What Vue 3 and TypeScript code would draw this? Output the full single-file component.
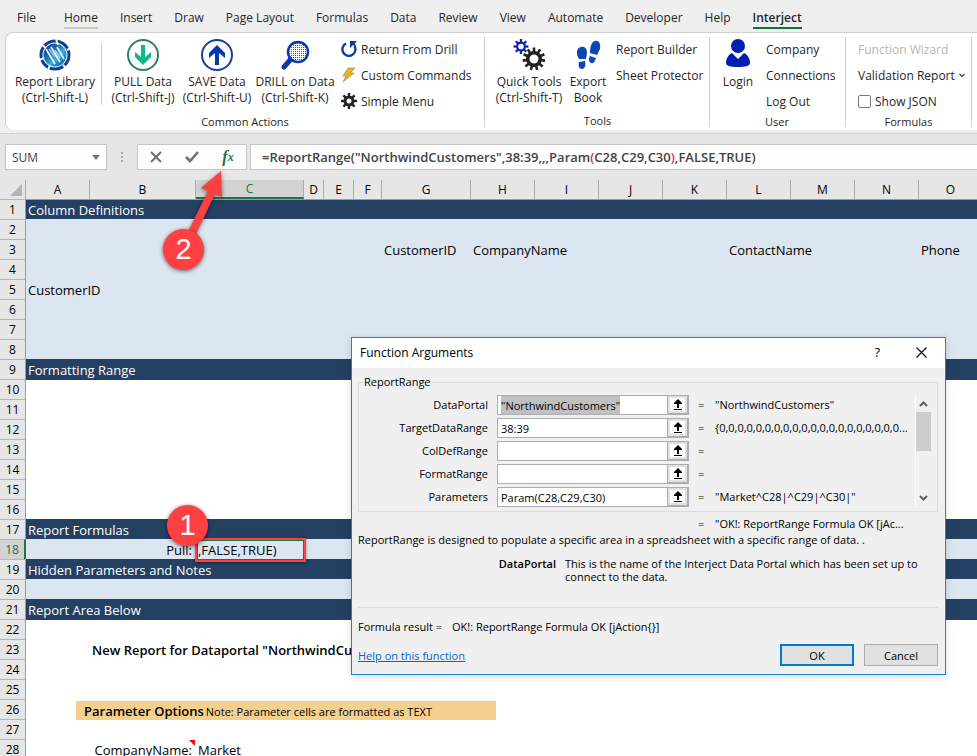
<script setup lang="ts">
import { onMounted, ref } from 'vue'

interface Row {
  n: number
  kind: 'navy' | 'blue' | 'plain'
  cells: Record<string, string>
}

interface Argument {
  name: string
  value: string
  result: string
}

const tabs = [
  'File', 'Home', 'Insert', 'Draw', 'Page Layout', 'Formulas', 'Data',
  'Review', 'View', 'Automate', 'Developer', 'Help', 'Interject',
]

const columns = ['A', 'B', 'C', 'D', 'E', 'F', 'G', 'H', 'I', 'J', 'K', 'L', 'M', 'N', 'O']

const cellText: Record<number, Record<string, string>> = {
  1: { A: 'Column Definitions' },
  3: { G: 'CustomerID', H: 'CompanyName', L: 'ContactName', O: 'Phone' },
  5: { A: 'CustomerID' },
  9: { A: 'Formatting Range' },
  17: { A: 'Report Formulas' },
  18: { B: 'Pull:', C: ',FALSE,TRUE)' },
  19: { A: 'Hidden Parameters and Notes' },
  21: { A: 'Report Area Below' },
  23: { B: 'New Report for Dataportal "NorthwindCustomers"' },
  28: { B: 'CompanyName:', C: 'Market' },
}

const navyRows = [1, 9, 17, 19, 21]
const blueRows = [2, 3, 4, 5, 6, 7, 8, 18, 20]

const rows: Row[] = Array.from({ length: 28 }, (_, i) => {
  const n = i + 1
  const kind = navyRows.includes(n) ? 'navy' : blueRows.includes(n) ? 'blue' : 'plain'
  return { n, kind, cells: cellText[n] ?? {} }
})

const args = ref<Argument[]>([
  { name: 'DataPortal', value: '"NorthwindCustomers"', result: '"NorthwindCustomers"' },
  { name: 'TargetDataRange', value: '38:39', result: '{0,0,0,0,0,0,0,0,0,0,0,0,0,0,0,0,0,0,0,0...' },
  { name: 'ColDefRange', value: '', result: '' },
  { name: 'FormatRange', value: '', result: '' },
  { name: 'Parameters', value: 'Param(C28,C29,C30)', result: '"Market^C28|^C29|^C30|"' },
])

const nameBox = ref('SUM')
const showJson = ref(false)

// Outline of a cog wheel with a round hole, for fill-rule evenodd.
function gear(cx: number, cy: number, teeth: number, outer: number, inner: number, hole: number): string {
  const pts: string[] = []
  const step = (Math.PI * 2) / teeth
  for (let i = 0; i < teeth; i++) {
    const a = i * step - Math.PI / 2
    const corners: [number, number][] = [
      [-0.28, inner], [-0.2, outer], [0.2, outer], [0.28, inner],
    ]
    for (const [t, r] of corners) {
      pts.push(`${(cx + Math.cos(a + t * step) * r).toFixed(2)} ${(cy + Math.sin(a + t * step) * r).toFixed(2)}`)
    }
  }
  return `M${pts.join('L')}ZM${cx - hole} ${cy}a${hole} ${hole} 0 1 0 ${hole * 2} 0a${hole} ${hole} 0 1 0 ${-hole * 2} 0Z`
}

onMounted(() => {
  const first = document.getElementById('arg-DataPortal') as HTMLInputElement | null
  first?.focus()
  first?.select()
})
</script>

<template>
  <div class="app">
    <nav class="tabs">
      <a
        v-for="tab in tabs"
        :key="tab"
        href="#"
        class="tab"
        :class="{ file: tab === 'File', hovered: tab === 'Home', active: tab === 'Interject' }"
      >{{ tab }}</a>
    </nav>

    <section class="ribbon">
      <div class="group actions">
        <div class="tools">
          <button class="big library">
            <svg width="32" height="32" viewBox="0 0 32 32">
              <defs>
                <linearGradient id="globe" x1="0" y1="0" x2="1" y2="1">
                  <stop offset="0" stop-color="#0b3f8c" />
                  <stop offset="0.35" stop-color="#1668ae" />
                  <stop offset="0.6" stop-color="#35b4dc" />
                  <stop offset="1" stop-color="#0a3a86" />
                </linearGradient>
              </defs>
              <circle cx="16" cy="16" r="14" fill="#fff" stroke="#0d3f93" stroke-width="3" />
              <circle cx="16" cy="16" r="11.500" fill="url(#globe)" />
              <path d="M7 10l9 15M12 8l9 15M18 8l7 12" stroke="#fff" stroke-width="1.600" fill="none" />
              <path d="M10 10l6 8M16 11l5 8" stroke="#9ad8ef" stroke-width="1.500" fill="none" />
              <path d="M17 0l2 6M3 6l4 3M0 21l5-2M9 31l2-5M24 26l3 3M28 11l4-2" stroke="#fff" stroke-width="2" />
            </svg>
            <span>Report Library<br />(Ctrl-Shift-L)</span>
          </button>
          <i class="divider"></i>
          <button class="big">
            <svg width="32" height="32" viewBox="0 0 32 32">
              <circle cx="16" cy="16" r="15" fill="#fff" stroke="#29806b" stroke-width="2" />
              <path d="M14 6h4v12l6-5v5l-8 8-8-8v-5l6 5z" fill="#14b58b" />
            </svg>
            <span>PULL Data<br />(Ctrl-Shift-J)</span>
          </button>
          <button class="big">
            <svg width="32" height="32" viewBox="0 0 32 32">
              <circle cx="16" cy="16" r="15" fill="#fff" stroke="#163f9c" stroke-width="2" />
              <path d="M14 26h4V14l6 5v-5l-8-8-8 8v5l6-5z" fill="#0536b4" />
            </svg>
            <span>SAVE Data<br />(Ctrl-Shift-U)</span>
          </button>
          <button class="big drill">
            <svg width="32" height="32" viewBox="0 0 32 32">
              <defs>
                <pattern id="mesh" width="2" height="2" patternUnits="userSpaceOnUse">
                  <rect width="2" height="2" fill="#fff" />
                  <rect width="1" height="1" fill="#555" />
                </pattern>
              </defs>
              <path d="M12 20l-7 8" stroke="#0b38ad" stroke-width="5" stroke-linecap="round" />
              <circle cx="19" cy="13" r="10" fill="url(#mesh)" stroke="#0b38ad" stroke-width="2.500" />
            </svg>
            <span>DRILL on Data<br />(Ctrl-Shift-K)</span>
          </button>
          <div class="stack">
            <button class="small">
              <svg width="16" height="16" viewBox="0 0 16 16">
                <path d="M5 2.500A6.500 6.500 0 1 0 13.500 5" fill="none" stroke="#0b3ba8" stroke-width="2.400" />
                <path d="M9 0h7l-2 2 1 4-3-2-3 3z" fill="#0b3ba8" />
              </svg>
              <span>Return From Drill</span>
            </button>
            <button class="small">
              <svg width="16" height="16" viewBox="0 0 16 16">
                <path d="M7 1h7l-5 5h4L2 15l3-6H2z" fill="#f2b01e" stroke="#8f7c4c" stroke-width="0.600" />
              </svg>
              <span>Custom Commands</span>
            </button>
            <button class="small">
              <svg width="16" height="16" viewBox="0 0 16 16">
                <path :d="gear(8, 8, 8, 8, 5.5, 2.5)" fill="#222" fill-rule="evenodd" />
              </svg>
              <span>Simple Menu</span>
            </button>
          </div>
        </div>
        <div class="caption">Common Actions</div>
      </div>

      <div class="group utilities">
        <div class="tools">
          <button class="big quick">
            <svg width="32" height="32" viewBox="0 0 32 32">
              <path :d="gear(8, 7.5, 8, 7.5, 5, 2.8)" fill="#0a22b0" fill-rule="evenodd" />
              <path :d="gear(21, 20, 11, 11.5, 8, 4.5)" fill="#222" fill-rule="evenodd" />
            </svg>
            <span>Quick Tools<br />(Ctrl-Shift-T)</span>
          </button>
          <button class="big export">
            <svg width="32" height="32" viewBox="0 0 32 32" fill="#0d47b5">
              <path d="M9 8c4-1 6 2 6 6l-1 6H7C4 15 4 9 9 8zM7 23l6-1c1 4 0 8-3 8s-4-3-3-7z" />
              <path d="M23 2c4-1 6 3 5 8l-3 6-7-2c0-5 1-11 5-12zM18 17l6 2c-1 4-3 6-5 5s-3-4-1-7z" />
            </svg>
            <span>Export<br />Book</span>
          </button>
          <div class="stack">
            <button class="small">Report Builder</button>
            <button class="small">Sheet Protector</button>
          </div>
        </div>
        <div class="caption">Tools</div>
      </div>

      <div class="group user">
        <div class="tools">
          <button class="big login">
            <svg width="32" height="32" viewBox="0 0 32 32" fill="#001fb0">
              <circle cx="16" cy="7" r="7" />
              <path d="M10 14l6 6 6-6c4 2 6 6 6 10 0 3-5 4-12 4S4 27 4 24c0-4 2-8 6-10z" />
            </svg>
            <span>Login</span>
          </button>
          <div class="stack">
            <button class="small">Company</button>
            <button class="small">Connections</button>
            <button class="small">Log Out</button>
          </div>
        </div>
        <div class="caption">User</div>
      </div>

      <div class="group formulas">
        <div class="tools">
          <div class="stack">
            <button class="small" disabled>Function Wizard</button>
            <button class="small">
              Validation Report
              <svg class="chevron" width="6" height="5" viewBox="0 0 6 5">
                <path d="M0.500 1l2.500 2.500L5.500 1" fill="none" stroke="#333" stroke-width="1.200" />
              </svg>
            </button>
            <label class="small check">
              <input v-model="showJson" type="checkbox" />
              Show JSON
            </label>
          </div>
        </div>
        <div class="caption">Formulas</div>
      </div>
    </section>

    <section class="formula-bar">
      <div class="name-box">
        <input v-model="nameBox" aria-label="Name box" />
        <button aria-label="Named ranges">
          <svg width="8" height="5" viewBox="0 0 8 5"><path d="M0 0h8L4 5z" fill="#777" /></svg>
        </button>
      </div>
      <svg class="grip" width="3" height="11" viewBox="0 0 3 11" fill="#a6a6a6">
        <path d="M0 0h2v2H0zM0 4h2v2H0zM0 8h2v2H0z" />
      </svg>
      <div class="entry">
        <button aria-label="Cancel entry">
          <svg width="12" height="12" viewBox="0 0 12 12">
            <path d="M1 1l10 10M11 1L1 11" stroke="#707070" stroke-width="2" />
          </svg>
        </button>
        <button aria-label="Accept entry">
          <svg width="14" height="12" viewBox="0 0 14 12">
            <path d="M1 6l4 4 8-9" fill="none" stroke="#707070" stroke-width="2.600" />
          </svg>
        </button>
        <button class="fx" aria-label="Insert function">f<sub>x</sub></button>
      </div>
      <div class="formula" role="textbox" contenteditable="true" aria-label="Formula" spellcheck="false">=ReportRange("NorthwindCustomers",38:39,,,Param<b class="paren">(</b>C28,C29,C30<b class="paren">)</b>,FALSE,TRUE)</div>
    </section>

    <main class="sheet">
      <table>
        <colgroup>
          <col class="w-head" />
          <col v-for="c in columns" :key="c" :class="'w-' + c" />
        </colgroup>
        <thead>
          <tr>
            <th class="corner">
              <svg width="12" height="12" viewBox="0 0 12 12"><path d="M12 0v12H0z" fill="#b4b4b4" /></svg>
            </th>
            <th v-for="c in columns" :key="c" :class="{ current: c === 'C' }">{{ c }}</th>
          </tr>
        </thead>
        <tbody>
          <tr v-for="row in rows" :key="row.n" :class="row.kind">
            <th :class="{ current: row.n === 18 }">{{ row.n }}</th>
            <td
              v-for="c in columns"
              :key="c"
              :class="{
                right: c === 'B' && (row.n === 18 || row.n === 28),
                title: row.n === 23,
                noted: c === 'B' && row.n === 26,
                commented: c === 'B' && row.n === 28,
                editing: c === 'C' && row.n === 18,
              }"
            >
              <template v-if="row.cells[c]">{{ row.cells[c] }}</template>
              <div v-if="row.n === 26 && c === 'B'" class="options">
                <strong>Parameter Options</strong>
                <small>Note: Parameter cells are formatted as TEXT</small>
              </div>
            </td>
          </tr>
        </tbody>
      </table>
    </main>

    <svg class="arrow" width="70" height="80" viewBox="0 0 70 80">
      <path d="M66 3L67 29 60 26 38 72 31 68 53 23 46 20z" fill="#ff4043" />
    </svg>
    <div class="badge two">2</div>
    <div class="badge one">1</div>

    <form class="dialog" role="dialog" aria-label="Function Arguments" @submit.prevent>
      <header>
        <h1>Function Arguments</h1>
        <button type="button" class="help" aria-label="Help">?</button>
        <button type="button" aria-label="Close">
          <svg width="11" height="11" viewBox="0 0 11 11">
            <path d="M0.500 0.500l10 10M10.500 0.500l-10 10" stroke="#111" stroke-width="1.200" />
          </svg>
        </button>
      </header>
      <div class="body">
        <fieldset>
          <legend>ReportRange</legend>
          <div class="arguments">
            <div class="list">
              <div v-for="arg in args" :key="arg.name" class="argument">
                <label :for="'arg-' + arg.name">{{ arg.name }}</label>
                <span class="field">
                  <input :id="'arg-' + arg.name" v-model="arg.value" spellcheck="false" />
                  <button type="button" :aria-label="'Select range for ' + arg.name">
                    <svg width="10" height="11" viewBox="0 0 10 11">
                      <path d="M5 0l4 4v1H6v4H4V5H1V4zM1 10h8v1H1z" fill="#000" />
                    </svg>
                  </button>
                </span>
                <span>=</span>
                <output>{{ arg.result }}</output>
              </div>
            </div>
            <div class="scrollbar">
              <svg width="9" height="6" viewBox="0 0 9 6"><path d="M1 5l3.500-3.500L8 5" /></svg>
              <i></i>
              <svg width="9" height="6" viewBox="0 0 9 6"><path d="M1 1l3.500 3.500L8 1" /></svg>
            </div>
          </div>
        </fieldset>
        <p class="outcome"><span>=</span><output>"OK!: ReportRange Formula OK [jAc...</output></p>
        <p class="about">ReportRange is designed to populate a specific area in a spreadsheet with a specific range of data. .</p>
        <dl>
          <dt>DataPortal</dt>
          <dd>This is the name of the Interject Data Portal which has been set up to connect to the data.</dd>
        </dl>
        <p class="result"><span>Formula result =</span><output>OK!: ReportRange Formula OK [jAction{}]</output></p>
        <footer>
          <a href="#">Help on this function</a>
          <button type="submit" class="primary">OK</button>
          <button type="button">Cancel</button>
        </footer>
      </div>
    </form>
  </div>
</template>

<style>
body {
  margin: 0;
}
</style>

<style scoped>
.app {
  position: relative;
  display: flex;
  flex-direction: column;
  height: 100vh;
  overflow: hidden;
  background: #efefef;
  color: #262626;
  font-family: "Open Sans", "Noto Sans", sans-serif;
  font-size: 12px;
}

button,
input {
  font: inherit;
  color: inherit;
  margin: 0;
  padding: 0;
  border: 0;
  background: none;
  border-radius: 0;
  outline: none;
}

.app *,
.app *::before,
.app *::after {
  box-sizing: border-box;
}

/* Tabs */
.tabs {
  display: flex;
  flex: none;
  gap: 22px;
  height: 32px;
  padding: 8px 17px 0;
}

.tab {
  height: 21px;
  line-height: 20px;
  color: #262626;
  text-decoration: none;
  white-space: nowrap;
}

.tab.file {
  margin-right: 6px;
}

.tab.hovered {
  border-bottom: 2px solid #c8c8c8;
}

.tab.active {
  border-bottom: 2px solid #0f703b;
  font-weight: 600;
}

/* Ribbon */
.ribbon {
  display: flex;
  flex: none;
  height: 98px;
  margin-left: 5px;
  padding-top: 4px;
  border-top: 1px solid #d0d0d0;
  border-left: 1px solid #d0d0d0;
  border-radius: 8px 0 0 8px;
  background: #fff;
}

.group {
  display: flex;
  flex: none;
  flex-direction: column;
  height: 90px;
  border-right: 1px solid #d2d2d2;
}

.actions {
  width: 479px;
  padding-left: 5px;
}

.utilities {
  width: 225px;
  padding-left: 6px;
}

.user {
  width: 136px;
  padding-left: 4px;
}

.formulas {
  width: 126px;
  padding-left: 12px;
}

.tools {
  display: flex;
  flex: 1;
}

.caption {
  height: 13px;
  line-height: 13px;
  font-size: 11px;
  text-align: center;
}

.actions .caption,
.utilities .caption,
.user .caption {
  margin-left: -5px;
}

.formulas .caption {
  margin-left: -12px;
}

.big {
  display: flex;
  flex: none;
  flex-direction: column;
  align-items: center;
  width: 74px;
  padding-top: 2px;
  line-height: 16px;
  white-space: nowrap;
}

.big span {
  margin-top: 3px;
}

.library {
  width: 88px;
}

.drill {
  width: 82px;
  margin-right: 5px;
}

.quick {
  width: 76px;
}

.export {
  width: 42px;
  margin-right: 7px;
}

.login {
  width: 48px;
  margin-right: 4px;
}

.divider {
  width: 1px;
  height: 62px;
  margin: 6px 4px 0 2px;
  background: #d2d2d2;
}

.stack {
  display: flex;
  flex-direction: column;
}

.small {
  display: flex;
  align-items: center;
  gap: 4px;
  height: 26px;
  padding-bottom: 2px;
  white-space: nowrap;
}

.small:disabled {
  color: #b5b5b5;
}

.check input {
  appearance: none;
  width: 13px;
  height: 13px;
  border: 1px solid #777;
  border-radius: 2px;
  background: #fff;
}

.check input:checked {
  background: #0f703b;
}

/* Formula bar */
.formula-bar {
  display: flex;
  flex: none;
  height: 47px;
  margin-top: 3px;
  padding: 10px 0 10px 5px;
  border-top: 1px solid #d2d2d2;
  background: #e6e6e6;
  color: #444;
}

.name-box,
.entry,
.formula {
  display: flex;
  align-items: center;
  height: 26px;
  border: 1px solid #c6c6c6;
  background: #fdfdfd;
}

.name-box {
  width: 102px;
  padding: 0 6px;
}

.name-box input {
  flex: 1;
  min-width: 0;
}

.name-box button,
.entry button {
  display: flex;
  align-items: center;
  justify-content: center;
}

.grip {
  margin: 8px 13px 0 14px;
}

.entry {
  width: 110px;
}

.entry button {
  flex: 1;
  height: 100%;
}

.entry .fx {
  color: #217346;
  font: italic bold 16px "Liberation Serif", serif;
}

.fx sub {
  font-size: 12px;
}

.formula {
  flex: 1;
  display: block;
  margin-left: 3px;
  padding-left: 11px;
  border-right: 0;
  font-size: 13px;
  font-weight: 600;
  line-height: 24px;
  white-space: nowrap;
}

.paren {
  color: #d8304a;
  font-weight: 600;
}

/* Sheet */
.sheet {
  flex: 1;
  min-height: 0;
  overflow: hidden;
  background: #fff;
}

table {
  width: 100%;
  min-width: 983px;
  table-layout: fixed;
  border-spacing: 0;
  color: #000;
  font-size: 13px;
}

.w-head { width: 26px; }
.w-A, .w-H, .w-I, .w-J, .w-K, .w-L, .w-M, .w-N { width: 64px; }
.w-B { width: 106px; }
.w-C { width: 108px; }
.w-D { width: 20px; }
.w-E { width: 30px; }
.w-F { width: 28px; }
.w-G { width: 89px; }

th {
  padding: 0;
  background: #e6e6e6;
  font-size: 12px;
  font-weight: 400;
  text-align: center;
}

thead th {
  height: 19px;
  line-height: 17px;
  border-right: 1px solid #ababab;
}

thead th.current {
  border-bottom: 2px solid #217346;
  background: #d2d2d2;
  color: #217346;
}

.corner svg {
  display: block;
  margin: 0 3px 0 auto;
}

tbody th {
  height: 20px;
  padding-top: 1px;
  border-top: 1px solid #b5b5b5;
  border-right: 1px solid #9b9b9b;
  line-height: 18px;
}

tbody th.current {
  border-right: 2px solid #217346;
  background: #d2d2d2;
  color: #217346;
}

td {
  height: 20px;
  padding: 2px 2px 0;
  line-height: 18px;
  white-space: nowrap;
}

.navy td {
  background: #244062;
  color: #fff;
}

.blue td {
  background: #dce6f1;
}

.navy + .plain td {
  box-shadow: inset 0 1px #244062;
}

tbody tr:first-child td {
  box-shadow: inset 0 1px #9b9b9b;
}

td.right {
  padding-right: 4px;
  text-align: right;
}

td.title {
  font-weight: 600;
}

td.noted,
td.commented,
td.editing {
  position: relative;
}

td.commented::after {
  content: "";
  position: absolute;
  top: 1px;
  right: 1px;
  border-top: 6px solid #f00;
  border-left: 6px solid transparent;
}

td.editing::after {
  content: "";
  position: absolute;
  inset: -1px -2px -3px -1px;
  border: 2px solid #ff4043;
  box-shadow: inset 0 0 0 1px #217346, 0 1px 3px rgba(0, 0, 0, 0.4);
}

.options {
  position: absolute;
  top: 2px;
  left: -14px;
  width: 420px;
  height: 19px;
  padding-left: 8px;
  background: #f4d08f;
  line-height: 21px;
}

.options strong {
  margin-right: 2px;
  font-size: 13px;
  font-weight: 600;
}

.options small {
  font-size: 11px;
}

/* Callouts */
.badge {
  position: absolute;
  width: 41px;
  height: 41px;
  border-radius: 50%;
  background: #ff4043;
  box-shadow: 0 1px 4px rgba(0, 0, 0, 0.6);
  color: #fff;
  font: 29px/41px "Liberation Sans", sans-serif;
  text-align: center;
}

.two {
  top: 229px;
  left: 163px;
}

.one {
  top: 505px;
  left: 167px;
}

.arrow {
  position: absolute;
  top: 168px;
  left: 155px;
  filter: drop-shadow(0 1px 2px rgba(0, 0, 0, 0.5));
}

/* Dialog */
.dialog {
  position: absolute;
  top: 337px;
  left: 351px;
  width: 595px;
  border: 1px solid #1883d7;
  background: #f0f0f0;
  box-shadow: 0 2px 8px rgba(0, 0, 0, 0.15);
  color: #000;
  font-size: 11px;
}

.dialog header {
  display: flex;
  align-items: center;
  height: 30px;
  padding: 0 18px 2px 8px;
  background: #fff;
}

h1 {
  flex: 1;
  margin: 0;
  font-size: 12px;
  font-weight: 400;
}

header button {
  display: flex;
}

header .help {
  margin-right: 36px;
  font-size: 13px;
}

.body {
  padding: 6px 7px 8px 6px;
}

fieldset {
  min-width: 0;
  margin: 0;
  padding: 5px 10px 4px 0;
  border: 1px solid #dcdcdc;
}

legend {
  height: 16px;
  margin-left: 4px;
  padding: 0 1px;
  line-height: 16px;
}

.arguments {
  display: flex;
  justify-content: space-between;
}

.list {
  display: grid;
  gap: 3px;
}

.argument {
  display: grid;
  grid-template-columns: 129px 192px 8px 200px;
  column-gap: 9px;
  height: 20px;
  line-height: 19px;
  white-space: nowrap;
}

.argument label {
  text-align: right;
}

.field {
  display: flex;
  height: 20px;
  border: 1px solid #abadb3;
  background: #fff;
}

.field input {
  flex: 1;
  min-width: 0;
  padding: 1px 3px 0;
}

.field input::selection {
  background: #c0c0c0;
  color: #000;
}

.field button {
  display: flex;
  align-items: center;
  justify-content: center;
  width: 21px;
  border: 2px solid #abadb3;
  border-width: 0 1px 1px;
  background: #fff;
  box-shadow: inset 0 0 0 2px #e1e1e1;
}

.scrollbar {
  display: flex;
  flex-direction: column;
  align-items: center;
  width: 16px;
  height: 112px;
  padding: 6px 0;
  border-left: 1px solid #fff;
}

.scrollbar svg {
  flex: none;
  fill: none;
  stroke: #606060;
  stroke-width: 2;
}

.scrollbar i {
  width: 15px;
  height: 39px;
  margin: 5px 0 auto;
  background: #cdcdcd;
}

.dialog p,
dl {
  margin: 0;
}

.outcome {
  display: flex;
  gap: 9px;
  padding: 4px 0 0 340px;
  line-height: 16px;
}

.outcome span {
  width: 8px;
}

.about {
  line-height: 16px;
  white-space: nowrap;
}

dl {
  display: grid;
  grid-template-columns: 198px 1fr;
  gap: 9px;
  height: 50px;
  margin: 9px 0 0;
  line-height: 13px;
}

dt {
  font-weight: 600;
  text-align: right;
}

dd {
  margin: 0;
}

.result {
  display: flex;
  gap: 10px;
  padding-top: 11px;
  border-top: 1px solid #dcdcdc;
  line-height: 16px;
}

footer {
  display: flex;
  align-items: center;
  gap: 10px;
  margin-top: 9px;
}

footer a {
  margin-right: auto;
  color: #0066cc;
}

footer button {
  width: 74px;
  height: 22px;
  border: 1px solid #adadad;
  background: #e1e1e1;
}

footer .primary {
  border: 2px solid #0078d7;
}
</style>
